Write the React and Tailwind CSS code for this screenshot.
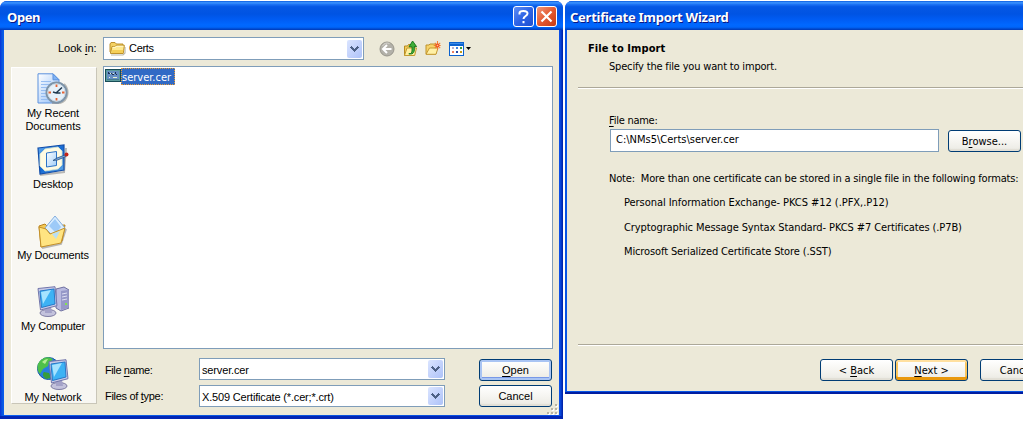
const ms = "font-['Liberation_Sans',Arial,sans-serif] text-[11px] leading-[13px] whitespace-nowrap";
const tahoma = "font-['DejaVu_Sans_Condensed','DejaVu_Sans',sans-serif] [font-stretch:condensed] text-[11px] leading-[13px] whitespace-nowrap";
const titleBar =
  "bg-[linear-gradient(180deg,#0a5be0_0%,#3c94ff_6%,#1c72f4_12%,#0557e4_20%,#0054e3_45%,#005bf2_62%,#0068ff_82%,#0066fa_90%,#0045c8_97%,#003ab8_100%)]";
const titleText =
  "font-['Noto_Sans',sans-serif] font-bold text-[13px] leading-[16px] text-white whitespace-nowrap [text-shadow:1px_1px_0_#0a1883]";

function U({ children }) {
  return <span className="underline decoration-1 underline-offset-2">{children}</span>;
}

function Chevron() {
  return (
    <span className="flex h-[18px] w-[15px] items-center justify-center rounded-[2px] bg-gradient-to-br from-[#dbe5ff] via-[#c4d3fc] to-[#adc2f8]">
      <svg width="9" height="6" viewBox="0 0 9 6" shapeRendering="crispEdges">
        <path d="M0 1h1v-1h1v1h1v1h1v1h1v-1h1v-1h1v-1h1v1h1v1h-1v1h-1v1h-1v1h-1v1h-1v-1h-1v-1h-1v-1h-1v-1h-1z" fill="#4d6185" />
      </svg>
    </span>
  );
}

function Combo({ className, children }) {
  return (
    <div className={"flex items-center justify-between border border-[#7f9db9] bg-white pr-px " + className}>
      {children}
      <Chevron />
    </div>
  );
}

function Button({ kind = "plain", font = tahoma, className = "", children }) {
  const ring = {
    plain: "shadow-[inset_0_-2px_1px_#e2dfd5]",
    focus: "shadow-[inset_0_0_0_2px_#a9c4f3,inset_0_-3px_0_#7898e8]",
    hot: "shadow-[inset_0_2px_0_#ffe0a0,inset_0_-3px_0_#e9980c,inset_0_0_0_2px_#f9c660]",
  }[kind];
  return (
    <button className={`flex h-[22px] w-[73px] shrink-0 items-center justify-center rounded-[3px] border border-[#003c74] bg-gradient-to-b from-white via-[#f6f5f1] to-[#ebeae3] ${ring} ${font} ${className}`}>
      {children}
    </button>
  );
}

function FolderIcon() {
  return (
    <svg width="17" height="15" viewBox="0 0 17 15">
      <path d="M2 14h12l2-2V6" fill="none" stroke="#8e8b77" strokeWidth="1.2" opacity=".6" />
      <path d="M1 11V3l1-1.500h4L7.500 3H14v9H2z" fill="#f4d163" stroke="#b7871f" strokeWidth=".9" />
      <path d="M1.500 12.500 3 5.500h3L7 4.300h8.400l-1.200 8.200z" fill="#ffe98e" stroke="#b98a20" strokeWidth=".9" />
      <path d="m2.500 12 .8-3h11l-.6 3z" fill="#f5cf58" />
      <path d="M3.600 6.300h3L7.500 5.200h6.800" stroke="#fffbd9" fill="none" />
    </svg>
  );
}

function BackIcon() {
  return (
    <svg width="16" height="16" viewBox="0 0 16 16">
      <circle cx="8" cy="8" r="7" fill="#b3b1a9" stroke="#98968c" />
      <path d="M3.500 5a6 6 0 0 1 7-2.600" stroke="#d8d7d1" fill="none" />
      <path d="M12.500 8H4M8 4 4 8l4 4" stroke="#fff" strokeWidth="2" fill="none" />
    </svg>
  );
}

function UpFolderIcon() {
  return (
    <svg width="16" height="17" viewBox="0 0 16 17">
      <path d="M1.500 15.500V6h3l1-1.500h6V15z" fill="#f3cc5c" stroke="#b78b20" />
      <path d="M1.500 15.500 4 8h9.500l-1.800 7.500z" fill="#fff0a0" stroke="#c29a31" />
      <path d="M5.800 13.800c3 0 3.400-1.500 3.200-7H6L9.600 1l4 5.600h-2.400c.6 5-.2 8.200-5.400 7.200z" fill="#3fae38" stroke="#137219" strokeWidth=".9" />
    </svg>
  );
}

function NewFolderIcon() {
  return (
    <svg width="16" height="15" viewBox="0 0 16 15">
      <path d="M1 13V4h3l1-1h6v10z" fill="#f6d36a" stroke="#be922b" />
      <path d="M1 13.300 4.500 7H13l-2 6.300z" fill="#fff0a5" stroke="#c49830" />
      <path d="M12.500 0v9M8.700 4.500h7M9.800 1.800l5.400 5.400M15.200 1.800 9.800 7.200" stroke="#f08033" strokeWidth="1.100" />
      <circle cx="12.500" cy="4.500" r="1.900" fill="#f34e22" />
      <circle cx="12.500" cy="4.500" r=".8" fill="#ffd180" />
    </svg>
  );
}

function ViewIcon() {
  return (
    <svg width="15" height="14" viewBox="0 0 15 14" shapeRendering="crispEdges">
      <path d="M0 0h15v14H0z" fill="#0b62cf" />
      <path d="M1 4h13v9H1z" fill="#fff" />
      <path d="M1 1h13v1H1z" fill="#3d8be8" />
      <path d="M3 5h2v2H3z" fill="#b7b2d0" /><path d="M7 5h2v2H7z" fill="#3f82dc" /><path d="M11 5h2v2h-2z" fill="#3a9d3b" />
      <path d="M3 9h2v2H3z" fill="#ee8061" /><path d="M7 9h2v2H7z" fill="#2447a4" /><path d="M11 9h2v2h-2z" fill="#c49b18" />
    </svg>
  );
}

function CertIcon() {
  return (
    <svg width="16" height="13" viewBox="0 0 16 13" shapeRendering="crispEdges">
      <path d="M0 0h16v13H0z" fill="#184d57" />
      <path d="M1 1h14v11H1z" fill="#5b9b9c" />
      <path d="M2 2h12v9H2z" fill="#668fc4" />
      <path d="M3 3h1v1h1v1H3zM6 4h1v1H6zM7 5h2v1H7zM10 3h1v2h-1zM11 5h1v1h-1z" fill="#1d3054" />
      <path d="M5 4h1v1H5zM8 4h1v1H8zM4 8h1v1H4zM8 8h4v1H8z" fill="#e5efd4" />
      <path d="M2 10h12v1H2z" fill="#437c91" />
    </svg>
  );
}

function RecentIcon() {
  return (
    <svg width="32" height="32" viewBox="0 0 32 32">
      <defs>
        <linearGradient id="page" x1="0" y1="0" x2="1" y2="1"><stop stopColor="#fff" /><stop offset="1" stopColor="#8fbcf8" /></linearGradient>
      </defs>
      <path d="M1 .8h15l6 6V30H1z" fill="url(#page)" stroke="#5c91dd" />
      <path d="M16 .8v6h6z" fill="#7fb3f5" stroke="#5c91dd" />
      <path d="M4 8.500h10M4 11.500h9M4 14.500h7M4 17.500h5M4 20.500h5M4 23.500h5M4 26.500h7" stroke="#96bdf2" />
      <path d="M27 11c6 6 4 17-4 19l-8 0" stroke="#8f8d88" strokeWidth="2" fill="none" opacity=".6" />
      <circle cx="19.500" cy="19.500" r="10" fill="#e6f1fa" stroke="#7d93a8" strokeWidth="2" />
      <circle cx="19.500" cy="19.500" r="8.700" fill="none" stroke="#c9d9e6" />
      <path d="M19.500 11.500v2.500M19.500 25v2.500M11.500 19.500H14M25 19.500h2.500" stroke="#e66332" strokeWidth="1.800" />
      <path d="M25 14.500 19 20l-3-1M19 20h4.500" stroke="#20394f" strokeWidth="1.500" fill="none" />
    </svg>
  );
}

function DesktopIcon() {
  return (
    <svg width="32" height="32" viewBox="0 0 32 32">
      <defs>
        <linearGradient id="desk" x1="0" y1="0" x2="1" y2="1"><stop stopColor="#60aaf0" /><stop offset=".5" stopColor="#176bd3" /><stop offset="1" stopColor="#66aee8" /></linearGradient>
        <linearGradient id="sheet" x1="0" y1="0" x2="1" y2="1"><stop stopColor="#fff" /><stop offset="1" stopColor="#9fcdf8" /></linearGradient>
      </defs>
      <path d="m3 31 24-3 2-24" fill="none" stroke="#777" strokeWidth="2" opacity=".5" />
      <path d="M1 4 27 1v25L3 30z" fill="url(#desk)" stroke="#124eaa" strokeWidth="1.200" />
      <path d="m8 5 13-2 4 4v14l-4 4-13 2-5-5V10z" fill="#fffbe3" stroke="#d9e6cf" strokeWidth=".8" />
      <path d="m9.500 9 10-1.500v14l-10 1.500z" fill="url(#sheet)" stroke="#2c73c6" />
      <path d="m16 16.500 4-2.500 8-3 1 1.500-8.500 3.500z" fill="#78a8e0" stroke="#285080" strokeWidth=".8" />
      <circle cx="29.500" cy="10.500" r="2" fill="#c52419" />
    </svg>
  );
}

function DocumentsIcon() {
  return (
    <svg width="32" height="34" viewBox="0 0 32 34">
      <path d="m5 33 19-4 5-15" fill="none" stroke="#777" strokeWidth="2" opacity=".5" />
      <path d="m2 11 6-2 2 2 18-1-3 16L4 32z" fill="#f3c957" stroke="#b9821b" />
      <path d="M8 13 18 1l10 12-8 12z" fill="#d9edff" stroke="#83aee0" />
      <path d="m12 11 6-7 6 8-5 6z" fill="#9dcaf8" />
      <path d="m2 12 7 2 4 5 15-6-4 15-20 4z" fill="#ffe481" stroke="#c3902a" />
      <path d="m15 19 8-3-4 8z" fill="#b9dff2" />
    </svg>
  );
}

function Monitor({ x = 0, y = 0 }) {
  return (
    <g transform={`translate(${x} ${y})`}>
      <ellipse cx="11" cy="27" rx="8" ry="3.500" fill="#c3c2dc" stroke="#7d7ba2" />
      <path d="M8 21h6l1 6H8z" fill="#a4a2c8" />
      <path d="M1 2.500 18 .7l2 19L3.500 24z" fill="#c7c9e7" stroke="#7276ab" />
      <path d="M3 5 17 3l1 15-13.500 3.500z" fill="#3db2f4" stroke="#2778c8" />
      <path d="M4 6 14 4 6 18z" fill="#a6e3ff" />
    </g>
  );
}

function ComputerIcon() {
  return (
    <svg width="32" height="32" viewBox="0 0 32 32">
      <path d="m19 3 8-2 5 3v18l-8 3-5-3z" fill="#b9bae0" stroke="#6f70a0" />
      <path d="m24 5 7-1v18l-7 2z" fill="#9698c8" />
      <path d="m25 8 5-1M25 11l5-1M25 14l5-1" stroke="#dedff2" />
      <path d="M28 17h2v2h-2z" fill="#84e44c" />
      <Monitor />
    </svg>
  );
}

function NetworkIcon() {
  return (
    <svg width="32" height="33" viewBox="0 0 32 33">
      <circle cx="11.500" cy="11.500" r="11" fill="#277fdf" stroke="#1757a8" />
      <path d="M4 3c5-4 10-3 12 0l-4 2-1 4-5 3-3 5C-1 12 0 6 4 3z" fill="#4fc04a" />
      <path d="m7 15 5 1 2 5-5 1c-3-2-4-5-2-7z" fill="#379d3b" />
      <path d="M5 5c2-2 4-3 6-3L8 7z" fill="#b5ed92" />
      <Monitor x={11} y={2} />
    </svg>
  );
}

const places = [
  { icon: RecentIcon, label: ["My Recent", "Documents"], box: "h-[71px]", tracking: "tracking-[-0.05px]" },
  { icon: DesktopIcon, label: ["Desktop"], box: "h-[71px]", tracking: "tracking-[-0.05px]" },
  { icon: DocumentsIcon, label: ["My Documents"], box: "h-[71px]", tracking: "tracking-[-0.15px]" },
  { icon: ComputerIcon, label: ["My Computer"], box: "h-[71px]", tracking: "tracking-[-0.2px]" },
  { icon: NetworkIcon, label: ["My Network"], box: "h-[47px]", tracking: "tracking-[-0.1px]" },
];

function OpenDialog() {
  return (
    <section className="flex h-[418px] w-[563px] shrink-0 flex-col overflow-hidden rounded-t-[7px] bg-[#0831d9]">
      <header className={"flex h-[29px] shrink-0 items-center justify-between pl-[7px] pr-[6px] pt-[2px] " + titleBar}>
        <h1 className={titleText + " pt-px tracking-[-0.4px]"}>Open</h1>
        <div className="flex gap-[2px]">
          <span className="flex size-[21px] items-center justify-center rounded-[3px] border border-white bg-gradient-to-br from-[#5e8df3] via-[#2f64e6] to-[#1d4fd0]">
            <svg width="11" height="14" viewBox="0 0 11 14"><path d="M1.500 4.500V3q0-2 4-2t4 2.500c0 2.500-4 2.500-4 5.500M5.500 11v2.300" stroke="#fff" strokeWidth="2" fill="none" /></svg>
          </span>
          <span className="flex size-[21px] items-center justify-center rounded-[3px] border border-white bg-gradient-to-br from-[#f09678] via-[#e35930] to-[#c63a12]">
            <svg width="13" height="13" viewBox="0 0 13 13"><path d="m1.500 1.500 10 10M11.500 1.500l-10 10" stroke="#fff" strokeWidth="2.200" /></svg>
          </span>
        </div>
      </header>
      <div className="flex min-h-0 flex-1 bg-[linear-gradient(90deg,#0831d9_0,#0855dd_2px,#0a5ff0_4px,#0855dd_50%,#0a4ee6_560px,#001ea0_563px)] pb-[4px] pl-[4px] pr-[4px] shadow-[inset_0_-3px_0_#0226b4]">
        <main className="flex flex-1 flex-col bg-[#ece9d8] pl-[7px]">
          <div className="flex h-[36px] pt-[7px]">
            <label className={ms + " w-[92px] pl-[47px] pt-[5px] tracking-[0px]"}>Look <U>i</U>n:</label>
            <Combo className="h-[23px] w-[261px]">
              <span className={"flex items-center gap-[3px] pl-[5px] tracking-[-0.3px] " + ms}><FolderIcon />Certs</span>
            </Combo>
            <div className="flex h-[23px] items-center pl-[15px]">
              <BackIcon />
              <span className="ml-[8px]"><UpFolderIcon /></span>
              <span className="ml-[6px]"><NewFolderIcon /></span>
              <span className="ml-[8px]"><ViewIcon /></span>
              <svg className="ml-[2px]" width="5" height="3"><path d="M0 0h5L2.500 3z" /></svg>
            </div>
          </div>
          <div className="flex">
            <nav className="mt-px h-[337px] w-[86px] overflow-hidden border border-l-white border-t-white border-b-[#c9c6b8] border-r-[#c9c6b8] bg-[#f8f7f2] pr-[2px] pt-[5px]">
              {places.map(({ icon: Icon, label, box, tracking }) => (
                <div key={label[0]} className={"flex flex-col items-center " + box}>
                  <div className="flex h-[34px] shrink-0">
                    <Icon />
                  </div>
                  <div className={`${ms} ${tracking} text-center`}>
                    {label.map((line) => <div key={line}>{line}</div>)}
                  </div>
                </div>
              ))}
            </nav>
            <div className="ml-[6px] w-[450px]">
              <div className="flex h-[283px] border border-[#7f9db9] bg-white pl-px pt-px">
                <div className="mt-px"><CertIcon /></div>
                <span className={"h-[17px] w-[54px] border border-dotted border-[#e49a3c] bg-[#316ac5] pt-[2px] text-white " + tahoma}>server.cer</span>
              </div>
              <div className="flex pl-[2px] pt-[9px]">
                <div className="w-[94px] pt-[6px]">
                  <div className={ms + " tracking-[-0.4px]"}>File <U>n</U>ame:</div>
                  <div className={ms + " mt-[13px] tracking-[-0.3px]"}>Files of <U>t</U>ype:</div>
                </div>
                <div className="flex flex-col gap-[5px]">
                  <Combo className="h-[22px] w-[246px]"><span className={ms + " pl-[2px] pt-[2px] tracking-[-0.15px]"}>server.cer</span></Combo>
                  <Combo className="h-[22px] w-[246px]"><span className={ms + " pl-[2px] pt-[2px] tracking-[-0.17px]"}>X.509 Certificate (*.cer;*.crt)</span></Combo>
                </div>
                <div className="ml-[34px] flex flex-col gap-[4px] pt-px">
                  <Button kind="focus" font={ms}><span><U>O</U>pen</span></Button>
                  <Button font={ms}>Cancel</Button>
                </div>
              </div>
            </div>
          </div>
          <svg className="-mt-[3px] mr-[1px] self-end" width="11" height="11" viewBox="0 0 11 11" shapeRendering="crispEdges">
            <path d="M9 1h2v2H9zM5 5h2v2H5zM9 5h2v2H9zM1 9h2v2H1zM5 9h2v2H5zM9 9h2v2H9z" fill="#fff" />
            <path d="M8 0h2v2H8zM4 4h2v2H4zM8 4h2v2H8zM0 8h2v2H0zM4 8h2v2H4zM8 8h2v2H8z" fill="#b8b4a3" />
          </svg>
        </main>
      </div>
    </section>
  );
}

function WizardDialog() {
  return (
    <section className="flex h-[393px] w-[458px] shrink-0 flex-col overflow-hidden rounded-tl-[7px] bg-[#0831d9]">
      <header className={"flex h-[29px] shrink-0 items-center pl-[5px] pt-[3px] " + titleBar}>
        <h1 className={titleText + " tracking-[-0.26px]"}>Certificate Import Wizard</h1>
      </header>
      <div className="flex min-h-0 flex-1 bg-[#0855e5] pb-[3px] pl-[2px] shadow-[inset_0_-2px_0_#001da0]">
        <main className="min-w-0 flex-1 overflow-hidden bg-[#ece9d8]">
          <div className="h-[57px] pl-[21px] pt-[12px]">
            <h2 className={tahoma + " font-bold tracking-[0.08px]"}>File to Import</h2>
            <p className={tahoma + " pl-[21px] pt-[5px] tracking-[-0.18px]"}>Specify the file you want to import.</p>
          </div>
          <hr className="ml-[11px] h-[2px] border-b border-t border-b-white border-t-[#aca899]" />
          <div className="h-[255px] pl-[43px] pt-[25px]">
            <label className={tahoma + " -ml-px block tracking-[-0.25px]"}><U>F</U>ile name:</label>
            <div className="mt-[2px] flex">
              <div className={"h-[23px] w-[329px] border border-[#7f9db9] bg-white pl-[5px] pt-[3px] " + tahoma}>C:\NMs5\Certs\server.cer</div>
              <Button className="ml-[9px] mt-px"><span>B<U>r</U>owse...</span></Button>
            </div>
            <p className={tahoma + " -ml-px mt-[20px] whitespace-pre tracking-[-0.17px]"}>Note:  More than one certificate can be stored in a single file in the following formats:</p>
            <ul className={tahoma + " flex flex-col gap-[12px] pl-[14px] pt-[11px]"}>
              <li className="tracking-[-0.05px]">Personal Information Exchange- PKCS #12 (.PFX,.P12)</li>
              <li className="tracking-[-0.1px]">Cryptographic Message Syntax Standard- PKCS #7 Certificates (.P7B)</li>
              <li className="-mt-px tracking-[-0.12px]">Microsoft Serialized Certificate Store (.SST)</li>
            </ul>
          </div>
          <hr className="ml-[11px] h-[2px] border-b border-t border-b-white border-t-[#aca899]" />
          <div className="flex pl-[253px] pt-[13px]">
            <Button><span>&lt; <U>B</U>ack</span></Button>
            <Button kind="hot" className="ml-[2px]"><span><U>N</U>ext &gt;</span></Button>
            <Button className="ml-[12px]">Cancel</Button>
          </div>
        </main>
      </div>
    </section>
  );
}

export default function App() {
  return (
    <div className="flex h-[422px] w-[1023px] items-start gap-[2px] overflow-hidden bg-white pt-px text-black">
      <OpenDialog />
      <WizardDialog />
    </div>
  );
}
